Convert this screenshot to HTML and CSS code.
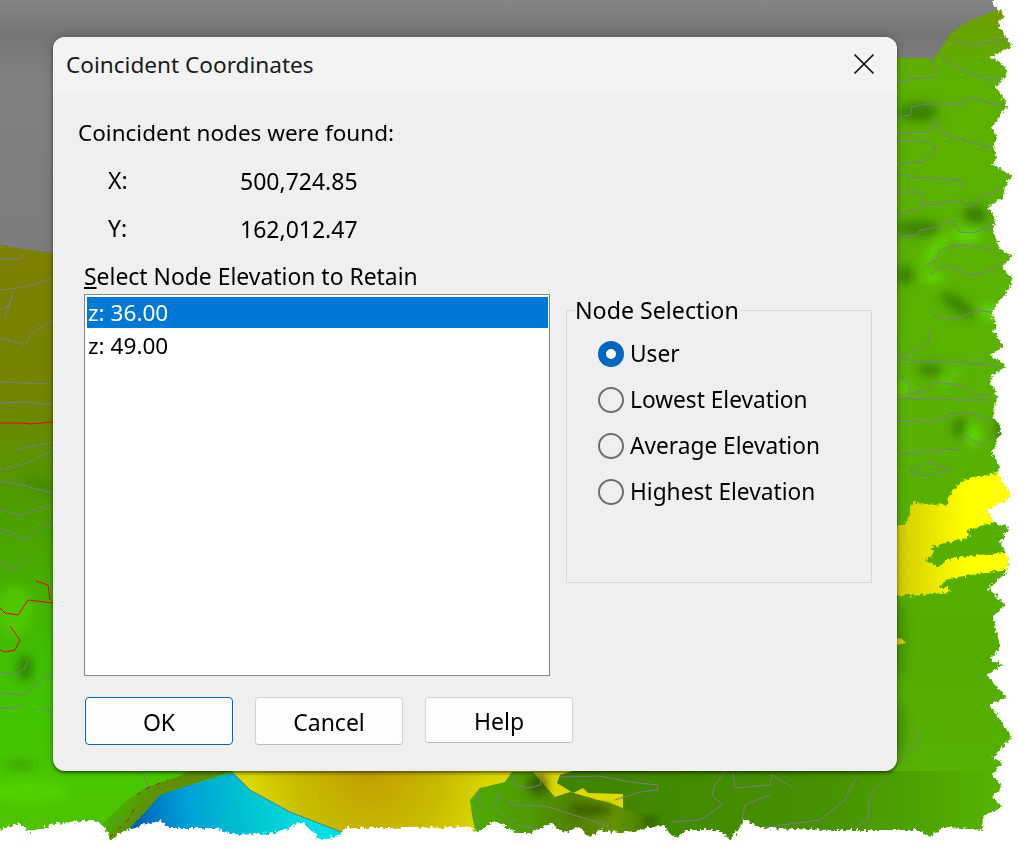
FILE: index.html
```html
<!DOCTYPE html>
<html lang="en">
<head>
<meta charset="utf-8">
<title>Coincident Coordinates</title>
<link rel="stylesheet" href="styles.css">
</head>
<body>
<div class="stage">
  <svg class="scene" width="1018" height="847" viewBox="0 0 1018 847" xmlns="http://www.w3.org/2000/svg" aria-hidden="true">
    <defs>
      <linearGradient id="sky" x1="0" y1="0" x2="0" y2="1">
        <stop offset="0" stop-color="#858585"/><stop offset="0.13" stop-color="#757575"/><stop offset="0.3" stop-color="#808080"/><stop offset="1" stop-color="#7c7c7c"/>
      </linearGradient>
      <linearGradient id="ground" gradientUnits="userSpaceOnUse" x1="0" y1="245" x2="0" y2="840">
        <stop offset="0" stop-color="#7d8000"/><stop offset="0.25" stop-color="#748400"/><stop offset="0.42" stop-color="#4e9a00"/><stop offset="0.7" stop-color="#40c000"/><stop offset="0.9" stop-color="#48c800"/><stop offset="1" stop-color="#50c000"/>
      </linearGradient>
      <linearGradient id="rightGround" gradientUnits="userSpaceOnUse" x1="0" y1="10" x2="0" y2="830">
        <stop offset="0" stop-color="#6f9c00"/><stop offset="0.08" stop-color="#5cb000"/><stop offset="0.4" stop-color="#5ab200"/><stop offset="0.8" stop-color="#54ac00"/><stop offset="1" stop-color="#58b400"/>
      </linearGradient>
      <linearGradient id="bottomGround" gradientUnits="userSpaceOnUse" x1="560" y1="0" x2="1010" y2="0">
        <stop offset="0" stop-color="#3f8400"/><stop offset="0.6" stop-color="#469200"/><stop offset="0.85" stop-color="#50a800"/><stop offset="1" stop-color="#58b400"/>
      </linearGradient>
      <linearGradient id="lumpFade" gradientUnits="userSpaceOnUse" x1="475" y1="0" x2="660" y2="0">
        <stop offset="0" stop-color="#4caa00"/><stop offset="0.3" stop-color="#4f9a00"/><stop offset="0.55" stop-color="#527f00"/><stop offset="0.75" stop-color="#659200"/><stop offset="1" stop-color="#3f7c00"/>
      </linearGradient>
      <linearGradient id="yellowFade" gradientUnits="userSpaceOnUse" x1="897" y1="0" x2="965" y2="0">
        <stop offset="0" stop-color="#d2cc00"/><stop offset="1" stop-color="#ffff00"/>
      </linearGradient>
      <radialGradient id="orange" gradientUnits="userSpaceOnUse" cx="370" cy="775" r="120">
        <stop offset="0" stop-color="#c2a000"/><stop offset="0.6" stop-color="#c8bc00"/><stop offset="1" stop-color="#dcd800"/>
      </radialGradient>
      <linearGradient id="water" gradientUnits="userSpaceOnUse" x1="135" y1="825" x2="310" y2="810">
        <stop offset="0" stop-color="#0060b8"/><stop offset="0.3" stop-color="#00a0d8"/><stop offset="0.65" stop-color="#00c4d0"/><stop offset="1" stop-color="#00e0e4"/>
      </linearGradient>
      <linearGradient id="coast" gradientUnits="userSpaceOnUse" x1="120" y1="800" x2="140" y2="815">
        <stop offset="0" stop-color="#44b400"/><stop offset="1" stop-color="#5e9000"/>
      </linearGradient>
      <filter id="soft" x="-50%" y="-50%" width="200%" height="200%"><feGaussianBlur stdDeviation="5"/></filter>
      <filter id="softer" x="-50%" y="-50%" width="200%" height="200%"><feGaussianBlur stdDeviation="4"/></filter>
      <filter id="rough" filterUnits="userSpaceOnUse" x="0" y="0" width="1018" height="847">
        <feTurbulence type="fractalNoise" baseFrequency="0.3" numOctaves="2" seed="4" result="n"/>
        <feDisplacementMap in="SourceGraphic" in2="n" scale="7" xChannelSelector="R" yChannelSelector="G"/>
      </filter>
      <clipPath id="land">
        <path d="M0,245 L17,248 L53,253 L120,260 L897,58 L927,58 L933,60 L952,32 L967,22 L996,10 L1018,10 L1018,847 L0,847 Z"/>
      </clipPath>
    </defs>

    <rect class="sky" width="1018" height="260"/>

    <g clip-path="url(#land)">
      <rect class="ground-left" x="0" y="240" width="480" height="607"/>
      <rect class="ground-right" x="620" y="0" width="398" height="847"/>

      <g class="blur">
        <ellipse class="dark" cx="918" cy="112" rx="20" ry="10"/>
        <ellipse class="dark" cx="975" cy="215" rx="12" ry="10"/>
        <ellipse class="dark" cx="918" cy="228" rx="22" ry="8"/>
        <ellipse class="dark" cx="905" cy="275" rx="9" ry="10"/>
        <ellipse class="dark" cx="958" cy="305" rx="20" ry="7" transform="rotate(35 958 305)"/>
        <ellipse class="dark" cx="930" cy="370" rx="12" ry="6"/>
        <ellipse class="dark" cx="960" cy="428" rx="8" ry="10"/>
        <ellipse class="dark" cx="1000" cy="430" rx="6" ry="10"/>
        <ellipse class="bright" cx="935" cy="250" rx="22" ry="5" transform="rotate(-50 935 250)"/>
        <ellipse class="bright" cx="967" cy="235" rx="14" ry="8"/>
        <ellipse class="bright" cx="933" cy="277" rx="12" ry="6"/>
        <ellipse class="bright" cx="990" cy="312" rx="9" ry="9"/>
        <ellipse class="bright" cx="950" cy="378" rx="16" ry="3" transform="rotate(-40 950 378)"/>
        <ellipse class="bright" cx="905" cy="388" rx="8" ry="6"/>
        <ellipse class="bright" cx="973" cy="435" rx="8" ry="12"/>
        <ellipse class="dark faint" cx="900" cy="640" rx="6" ry="40"/>
        <ellipse class="dark faint" cx="900" cy="730" rx="6" ry="28"/>
        <ellipse class="bright faint" cx="30" cy="792" rx="40" ry="12"/>
        <ellipse class="bright faint" cx="15" cy="610" rx="18" ry="26"/>
        <ellipse class="dark" cx="25" cy="668" rx="8" ry="14"/>
        <ellipse class="dark faint" cx="20" cy="765" rx="16" ry="5"/>
        <ellipse class="dark faint" cx="40" cy="485" rx="16" ry="5" transform="rotate(25 40 485)"/>
      </g>

      <g filter="url(#rough)">
        <path class="yellow" d="M897,525 L908,522 L912,503 L948,505 L950,493 L963,480 L997,473 L1012,496 L987,510 L993,522 L967,530 L970,537 L932,547 L933,555 L925,560 L938,567 L947,560 L962,557 L1007,552 L1009,560 L1007,570 L950,578 L938,587 L947,587 L950,593 L910,595 L890,596 L890,525 Z"/>
      </g>
      <path class="yellow" d="M897,638 L902,639 L906,643 L897,645 Z"/>

      <path class="band" d="M103,823 L127,800 L147,787 L177,777 L190,771 L233,771 L227,773 L190,785 L160,795 L147,810 L128,830 L110,840 Z"/>
      <path class="orange" d="M233,771 L640,771 L640,847 L344,847 L344,833 L290,812 L250,790 L233,773 Z"/>
      <path class="water" d="M227,774 L233,773 L250,790 L290,812 L344,833 L340,847 L126,847 L128,830 L147,810 L160,795 L190,785 Z"/>
      <path class="shore" d="M233,773 L250,790 L290,812 L344,833"/>

      <path class="sheet" d="M573,771 L1018,771 L1018,847 L623,847 L623,794 L588,793 L583,788 L573,793 L557,783 L560,775 Z"/>
      <path class="lump" d="M470,800 L480,788 L505,782 L512,772 L533,772 L555,797 L570,792 L598,800 L608,802 L640,815 L660,825 L660,847 L470,847 L475,830 L472,815 Z"/>
      <ellipse class="shade blur-s" cx="538" cy="785" rx="10" ry="11"/>
      <ellipse class="shade blur-s" cx="590" cy="810" rx="22" ry="5"/>
      <ellipse class="shade blur-s" cx="650" cy="821" rx="10" ry="4"/>

      <g class="contours">
        <path d="M897,82 L920,78 L934,77 L937,70 L930,60"/>
        <path d="M952,40 L975,45 L990,42 L1008,39"/>
        <path d="M940,55 L950,62 L965,72 L990,80 L1005,80"/>
        <path d="M897,117 L910,115 L912,107 L925,104 L965,104 L968,97 L990,103 L1005,105"/>
        <path d="M897,133 L930,132 L935,120 L938,125 L945,135 L965,140 L992,148"/>
        <path d="M897,165 L925,160 L930,155 L935,150 L935,145 L920,141 L897,141"/>
        <path d="M897,175 L960,180 L965,183 L960,187"/>
        <path d="M897,192 L920,192 L925,200 L920,208 L897,215"/>
        <path d="M920,205 L960,200 L965,205 L972,207 L980,197 L1000,190"/>
        <path d="M897,236 L918,235 L920,230 L940,227 L945,220 L953,222 L960,232 L973,233 L990,227 L993,220"/>
        <path d="M925,265 L935,262 L940,250 L960,245 L975,247 L995,250"/>
        <path d="M930,275 L945,265 L970,275 L985,272 L1000,265"/>
        <path d="M930,310 L945,320 L960,318 L975,310 L990,312 L1000,313"/>
        <path d="M930,330 L928,345 L905,355 L897,356"/>
        <path d="M897,360 L950,362 L990,365 L1000,368"/>
        <path d="M897,375 L910,385 L908,395 L925,390 L935,382 L960,385 L975,395 L990,395"/>
        <path d="M897,398 L960,400 L990,400"/>
        <path d="M897,420 L930,422 L950,415 L965,412 L990,420"/>
        <path d="M960,445 L965,435 L980,445 L990,438 L1000,430"/>
        <path d="M897,455 L940,450 L960,448"/>
        <path d="M910,470 L930,462 L950,470 L930,475 L910,472"/>
        <path d="M725,771 L715,785 L712,795 L722,805 L700,820 L670,822"/>
        <path d="M733,773 L735,788 L770,785 L772,775 L792,787"/>
        <path d="M770,795 L745,805 L742,820"/>
        <path d="M860,771 L850,790 L845,800 L820,820 L760,828"/>
        <path d="M885,780 L870,795 L868,820 L855,828"/>
        <path d="M915,725 L918,745 L910,752 L900,760 L885,775"/>
        <path d="M512,775 L515,785 L530,788 L540,785 L543,775"/>
        <path d="M499,795 L510,805 L545,806 L590,820 L610,827"/>
        <path d="M560,777 L600,776 L630,782 L658,785 L658,790 L640,792 L615,800"/>
        <path d="M480,788 L478,800 L482,808 L473,812 L480,827"/>
        <path d="M498,793 L495,808 L512,823 L540,830"/>
        <path d="M0,259 L20,259 L25,252"/>
        <path d="M0,290 L25,287 L53,278"/>
        <path d="M0,310 L10,305 L13,292 L5,318"/>
        <path d="M0,338 L25,345 L30,335 L53,320"/>
        <path d="M0,382 L53,384"/>
        <path d="M0,403 L30,402 L53,405"/>
        <path d="M15,450 L53,442"/>
        <path d="M0,470 L30,462 L53,450"/>
        <path d="M0,480 L53,493"/>
        <path d="M0,510 L20,515 L53,505"/>
        <path d="M0,530 L25,540 L40,527 L53,520"/>
        <path d="M0,563 L15,570 L30,555"/>
        <path d="M0,672 L15,675 L25,668 L28,660"/>
        <path d="M0,693 L25,695 L50,672"/>
        <path d="M0,708 L10,708 L22,705"/>
        <path d="M42,708 L53,712"/>
        <path d="M143,773 L148,786 L150,790"/>
        <path d="M114,815 L119,823"/>
      </g>
      <g class="redlines">
        <path d="M0,423 L20,423 L30,424 L53,422"/>
        <path d="M0,608 L5,613 L18,615 L28,600 L53,603"/>
        <path d="M36,581 L48,585 L50,600"/>
        <path d="M10,626 L20,640 L15,650 L5,652 L0,650"/>
        <path class="dashed" d="M110,837 L128,820 L136,806"/>
        <path class="dashed" d="M137,795 L150,787 L168,780"/>
      </g>
    </g>

    <path class="paper" filter="url(#rough)" d="M993,-10 L993,5 L997,8 L1005,16 L997,22 L1002,30 L1012,47 L990,57 L1005,65 L1007,75 L995,87 L1003,97 L1007,107 L992,126 L997,137 L993,147 L997,155 L993,165 L1012,176 L1005,187 L1003,197 L988,207 L996,218 L993,230 L999,247 L1012,257 L1002,267 L1012,278 L1007,293 L998,302 L992,313 L997,328 L993,330 L1004,347 L990,355 L1006,366 L990,378 L997,397 L993,417 L1002,428 L992,453 L1000,467 L997,473 L1012,496 L987,510 L993,522 L1009,527 L1000,543 L1009,560 L1007,572 L988,588 L1005,605 L993,617 L1000,647 L990,660 L1003,665 L987,675 L1006,697 L990,705 L1012,737 L993,757 L1002,763 L992,775 L1002,787 L992,797 L1003,807 L983,817 L982,830 L960,828 L943,827 L930,837 L920,830 L867,830 L833,830 L760,828 L745,820 L730,840 L720,830 L687,830 L677,837 L670,835 L663,825 L640,830 L620,833 L600,830 L590,837 L580,827 L563,833 L550,823 L530,833 L517,833 L494,820 L478,832 L467,827 L383,828 L344,828 L340,835 L321,840 L302,822 L275,833 L237,835 L214,828 L168,828 L161,820 L126,830 L111,840 L103,825 L94,820 L57,823 L29,832 L19,823 L0,830 L-10,830 L-10,860 L1030,860 L1030,-10 Z"/>
  </svg>

  <section class="dialog">
    <header class="titlebar">
      <h1 class="title">Coincident Coordinates</h1>
      <svg class="close" width="20" height="20" viewBox="0 0 20 20" xmlns="http://www.w3.org/2000/svg" aria-hidden="true"><path d="M0.5,0.5 L19.5,19.5 M19.5,0.5 L0.5,19.5"/></svg>
    </header>
    <div class="content">
      <p class="found">Coincident nodes were found:</p>
      <dl class="coords">
        <div class="coord"><dt>X:</dt><dd>500,724.85</dd></div>
        <div class="coord"><dt>Y:</dt><dd>162,012.47</dd></div>
      </dl>
      <div class="panels">
        <div class="list-panel">
          <div class="list-label"><u>S</u>elect Node Elevation to Retain</div>
          <ul class="listbox">
            <li class="item selected">z: 36.00</li>
            <li class="item">z: 49.00</li>
          </ul>
        </div>
        <fieldset class="group">
          <legend class="legend">Node Selection</legend>
          <div class="radio"><span class="dot on"></span>User</div>
          <div class="radio"><span class="dot"></span>Lowest Elevation</div>
          <div class="radio"><span class="dot"></span>Average Elevation</div>
          <div class="radio"><span class="dot"></span>Highest Elevation</div>
        </fieldset>
      </div>
      <div class="buttons">
        <button class="btn primary">OK</button>
        <button class="btn">Cancel</button>
        <button class="btn short">Help</button>
      </div>
    </div>
  </section>
</div>
</body>
</html>
```
FILE: styles.css
```css
* { box-sizing: border-box; }
html, body { margin: 0; padding: 0; background: #fff; }
body { font-family: "Noto Sans", "Open Sans", sans-serif; color: #000; }

.stage { position: relative; width: 1018px; height: 847px; overflow: hidden; }
.scene { position: absolute; left: 0; top: 0; display: block; }

.sky { fill: url(#sky); }
.ground-left { fill: url(#ground); }
.ground-right { fill: url(#rightGround); }
.blur { filter: url(#soft); }
.blur-s { filter: url(#softer); }
.dark { fill: #2f7000; opacity: .7; }
.bright { fill: #5ee000; opacity: .8; }
.dark.faint, .bright.faint { opacity: .4; }
.yellow { fill: url(#yellowFade); }
.band { fill: url(#coast); }
.orange { fill: url(#orange); }
.water { fill: url(#water); }
.shore { fill: none; stroke: #5f7f6f; stroke-width: 1; }
.sheet { fill: url(#bottomGround); }
.lump { fill: url(#lumpFade); }
.shade { fill: #2c4800; opacity: .7; }
.contours path { fill: none; stroke: #7d7d86; stroke-width: 1; }
.redlines path { fill: none; stroke: #ee0000; stroke-width: 1; }
.redlines .dashed { stroke-dasharray: 4 7; }
.paper { fill: #fff; }

.dialog {
  position: absolute; left: 53px; top: 37px; width: 844px; height: 734px;
  background: #efefef; border-radius: 12px;
  box-shadow: 0 2px 3px rgba(0,0,0,.45), 0 0 10px rgba(0,0,0,.25);
  overflow: hidden;
}
.titlebar {
  height: 56px; background: #f3f3f3;
  display: flex; align-items: center; justify-content: space-between;
  padding: 0 23px 2px 13px;
}
.title { margin: 0; padding-top: 2px; font-size: 22.6px; font-weight: 400; line-height: 30px; color: #1a1a1a; }
.close { display: block; }
.close path { fill: none; stroke: #1c1c1c; stroke-width: 1.6; }

.content { padding: 25px 25px 0 31px; font-size: 23px; line-height: 30px; }
.found { margin: 0 0 0 -6px; font-size: 22.5px; }
.coords { margin: 18px 0 0 24px; display: flex; flex-direction: column; gap: 18px; }
.coord { display: flex; }
.coord dt { width: 132px; margin-top: -1px; }
.coord dd { margin: 0; }

.panels { display: flex; gap: 16px; margin-top: 18px; }
.list-panel { width: 466px; }
.list-label { height: 32px; font-size: 22.9px; }
.listbox {
  list-style: none; margin: 0; padding: 2px 1px 2px 2px;
  height: 382px; background: #fff; border: 1px solid #828790;
  font-size: 22.6px;
}
.item { height: 31px; padding-left: 1px; line-height: 32px; }
.item.selected { background: #0078d7; color: #fff; }
.item + .item { margin-top: 2px; }

.group {
  margin: 33px 0 0; padding: 6px 0 0 31px; width: 306px; height: 288px;
  border: 1px solid #dadada; min-width: 0;
}
.legend { margin-left: -23px; padding: 0; font-size: 23.2px; line-height: 30px; background: #efefef; }
.radio { display: flex; align-items: center; gap: 6px; height: 46px; font-size: 22.7px; }
.dot {
  width: 26px; height: 26px; border-radius: 50%;
  border: 2px solid #6e6e6e; background: transparent; flex: none;
}
.dot.on { border: 8px solid #0067c0; background: #fff; }

.buttons { display: flex; gap: 22px; margin: 21px 0 0 1px; align-items: flex-start; }
.btn {
  width: 148px; height: 48px; padding: 2px 0 0;
  font: inherit; color: #000;
  background: #fdfdfd; border: 1px solid #d2d2d2; border-bottom-color: #bcbcbc;
  border-radius: 4px;
}
.btn.primary { border: 1px solid #0067c0; }
.btn.short { height: 46px; }
```
